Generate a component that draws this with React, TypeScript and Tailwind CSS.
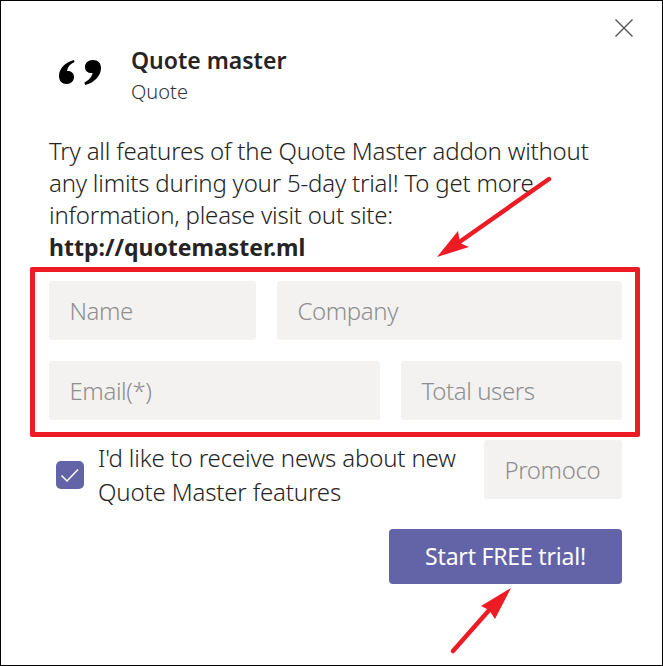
import React from "react";

function Field({ label, className }: { label: string; className: string }) {
  return (
    <div className={`h-[59px] rounded-[3px] bg-[#f3f2f1] flex items-center pl-[20.5px] overflow-hidden text-[24px] tracking-[-0.4px] text-[#8f8f8f] font-light ${className}`}>
      {label}
    </div>
  );
}

export default function App() {
  return (
    <div className="relative w-[663px] h-[666px] bg-white border border-black overflow-hidden text-[#252423] font-['Noto_Sans',sans-serif]">
      <div className="flex justify-end pt-[18px] pr-[29px] h-[19px]">
        <svg width="18" height="18" viewBox="0 0 18 18" className="shrink-0">
          <path d="M0.5 0.5 L17.5 17.5 M17.5 0.5 L0.5 17.5" stroke="#555" strokeWidth="1.4" fill="none" />
        </svg>
      </div>

      <div className="flex pl-[56px] mt-[28px] h-[62px]">
        <svg width="46" height="27" viewBox="0 0 46 27" className="mt-[11px] shrink-0">
          <path d="M17 1 C9 3 2 9 2 17 C2 22 5 25 9.500 25 C14 25 17 22 17 18 C17 14 14 11.500 10 12 C10.500 8 13 5 17.500 3 Z" fill="#000" />
          <path d="M28 26 C37 24 44 17 44 9 C44 4 41 1 36 1 C31 1 28 4 28 8 C28 12 31 14.500 35.500 14 C35 18 32 21 27.500 23.500 Z" fill="#000" />
        </svg>
        <div className="ml-[28px]">
          <div className="text-[23px] leading-[32px] font-semibold text-[#252423] mt-[-4px]">Quote master</div>
          <div className="text-[20px] leading-[28px] font-light mt-[2px] text-[#333]">Quote</div>
        </div>
      </div>

      <div className="ml-[48px] mt-[25px] w-[590px] text-[24px] leading-[32px] font-light tracking-[-0.2px] text-[#252423]">
        <div>Try all features of the Quote Master addon without</div>
        <div>any limits during your 5-day trial! To get more</div>
        <div>information, please visit out site:</div>
        <div className="text-[23px] font-bold tracking-normal">http://quotemaster.ml</div>
      </div>

      <div className="ml-[29px] mt-[4px] w-[610px] h-[170px] border-[5px] border-[#ed1c24] rounded-[2px] pt-[9px] pl-[14px] pr-[13px] flex flex-col gap-[21px]">
        <div className="flex gap-[21px]">
          <Field label="Name" className="w-[207px]" />
          <Field label="Company" className="flex-1" />
        </div>
        <div className="flex gap-[21px]">
          <Field label="Email(*)" className="w-[331px]" />
          <Field label="Total users" className="flex-1" />
        </div>
      </div>

      <div className="flex items-start mt-[3px] ml-[55px] w-[566px]">
        <div className="w-[28px] h-[28px] mt-[21px] rounded-[5px] bg-[#6264a7] shrink-0">
          <svg width="28" height="28" viewBox="0 0 28 28">
            <path d="M5.500 14.500 L11 20 L22 8.500" stroke="#fff" strokeWidth="1.500" fill="none" />
          </svg>
        </div>
        <div className="ml-[14px] pt-[1px] flex-1 text-[24px] leading-[34px] font-light tracking-[-0.15px] text-[#252423]">
          <div>I'd like to receive news about new</div>
          <div>Quote Master features</div>
        </div>
        <Field label="Promoco" className="w-[138px] shrink-0" />
      </div>

      <div className="flex justify-end mt-[20px] mr-[40px]">
        <div className="w-[233px] h-[55px] rounded-[4px] bg-[#6264a7] text-white text-[23px] tracking-[-0.2px] flex items-center justify-center">
          Start FREE trial!
        </div>
      </div>

      <svg className="absolute left-[-1px] top-[-1px] pointer-events-none" width="663" height="666" viewBox="0 0 663 666">
        <path d="M549 179 L458 243" stroke="#ed1c24" strokeWidth="4.500" strokeLinecap="round" fill="none" />
        <path d="M437 257 L458 231 L460 243 L469 247 Z" fill="#ed1c24" />
        <path d="M453 651 L491 608" stroke="#ed1c24" strokeWidth="4.500" strokeLinecap="round" fill="none" />
        <path d="M511 588 L481 606 L489 610 L495 619 Z" fill="#ed1c24" />
      </svg>
    </div>
  );
}
